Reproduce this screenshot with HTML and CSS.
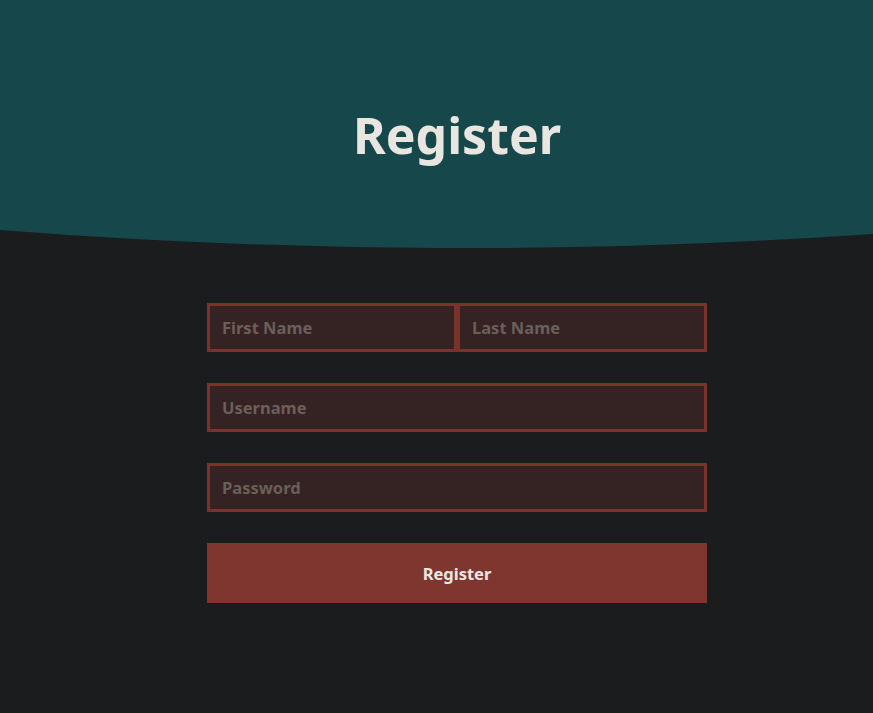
FILE: index.html
```html
<!DOCTYPE html>
<html lang="en">
<head>
<meta charset="utf-8">
<title>Register</title>
<link rel="stylesheet" href="styles.css">
</head>
<body>
<header class="hero">
  <div class="hero-inner">
    <h1 class="title">Register</h1>
  </div>
  <svg class="curve" viewBox="0 0 873 18" preserveAspectRatio="none" aria-hidden="true">
    <path d="M0 0 H873 V4 Q436 34 0 0 Z" fill="#16484b"/>
  </svg>
</header>
<main class="content">
  <form class="form">
    <div class="row">
      <input class="field" type="text" placeholder="First Name">
      <input class="field" type="text" placeholder="Last Name">
    </div>
    <input class="field" type="text" placeholder="Username">
    <input class="field" type="password" placeholder="Password">
    <button class="btn" type="button">Register</button>
  </form>
</main>
</body>
</html>
```
FILE: styles.css
```css
html, body {
  margin: 0;
  padding: 0;
  background: #1b1c1e;
  font-family: "Noto Sans", "Open Sans", sans-serif;
  height: 100%;
}
.hero {
  background: transparent;
}
.hero-inner {
  background: #16484b;
  height: 230px;
  display: flex;
  align-items: center;
  justify-content: center;
  padding-left: 41px;
  box-sizing: border-box;
}
.title {
  margin: 0;
  margin-top: 40px;
  color: #e9e6e1;
  font-size: 50px;
  font-weight: 700;
  line-height: 1;
}
.curve {
  display: block;
  width: 100%;
  height: 18px;
}
.content {
  padding-left: 41px;
  padding-top: 55px;
  display: flex;
  justify-content: center;
}
.form {
  width: 500px;
  display: flex;
  flex-direction: column;
  gap: 31px;
}
.row {
  display: flex;
}
.row .field {
  flex: 1;
  min-width: 0;
}
.field {
  box-sizing: border-box;
  height: 49px;
  margin: 0;
  border: 3px solid #7a322b;
  background: #352222;
  padding: 0 12px;
  font-family: "Noto Sans", "Open Sans", sans-serif;
  font-size: 16.5px;
  font-weight: 700;
  color: #c9bdb7;
  outline: none;
  width: 100%;
}
.field::placeholder {
  color: #6b5f5a;
  opacity: 1;
}
.btn {
  height: 60px;
  border: 0;
  background: #7f362f;
  color: #ece6e2;
  font-family: "Noto Sans", "Open Sans", sans-serif;
  font-size: 16.5px;
  font-weight: 700;
  cursor: pointer;
  padding: 0;
}
```
